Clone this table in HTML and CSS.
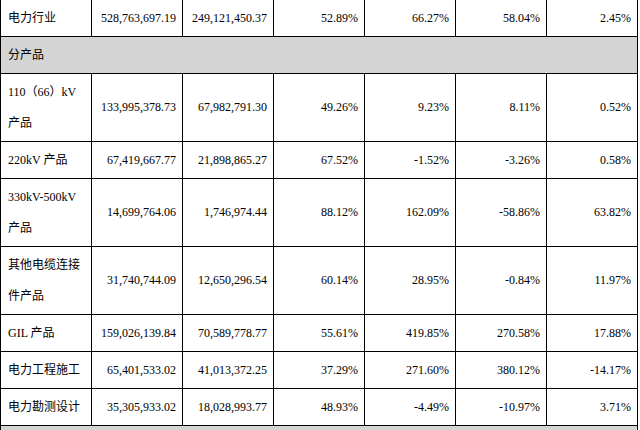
FILE: index.html
```html
<!DOCTYPE html>
<html lang="zh-CN">
<head>
<meta charset="utf-8">
<title>分产品</title>
<link rel="stylesheet" href="styles.css">
</head>
<body>
<table class="data">
  <colgroup>
    <col class="c"><col class="c"><col class="c"><col class="c"><col class="c"><col class="c"><col class="c">
  </colgroup>
  <tbody>
    <tr>
      <td class="name">电力行业</td>
      <td>528,763,697.19</td>
      <td>249,121,450.37</td>
      <td>52.89%</td>
      <td>66.27%</td>
      <td>58.04%</td>
      <td>2.45%</td>
    </tr>
    <tr class="section">
      <td class="name" colspan="7">分产品</td>
    </tr>
    <tr>
      <td class="name">110（66）kV 产品</td>
      <td>133,995,378.73</td>
      <td>67,982,791.30</td>
      <td>49.26%</td>
      <td>9.23%</td>
      <td>8.11%</td>
      <td>0.52%</td>
    </tr>
    <tr>
      <td class="name">220kV 产品</td>
      <td>67,419,667.77</td>
      <td>21,898,865.27</td>
      <td>67.52%</td>
      <td>-1.52%</td>
      <td>-3.26%</td>
      <td>0.58%</td>
    </tr>
    <tr>
      <td class="name">330kV-500kV 产品</td>
      <td>14,699,764.06</td>
      <td>1,746,974.44</td>
      <td>88.12%</td>
      <td>162.09%</td>
      <td>-58.86%</td>
      <td>63.82%</td>
    </tr>
    <tr>
      <td class="name">其他电缆连接件产品</td>
      <td>31,740,744.09</td>
      <td>12,650,296.54</td>
      <td>60.14%</td>
      <td>28.95%</td>
      <td>-0.84%</td>
      <td>11.97%</td>
    </tr>
    <tr>
      <td class="name">GIL 产品</td>
      <td>159,026,139.84</td>
      <td>70,589,778.77</td>
      <td>55.61%</td>
      <td>419.85%</td>
      <td>270.58%</td>
      <td>17.88%</td>
    </tr>
    <tr>
      <td class="name">电力工程施工</td>
      <td>65,401,533.02</td>
      <td>41,013,372.25</td>
      <td>37.29%</td>
      <td>271.60%</td>
      <td>380.12%</td>
      <td>-14.17%</td>
    </tr>
    <tr>
      <td class="name">电力勘测设计</td>
      <td>35,305,933.02</td>
      <td>18,028,993.77</td>
      <td>48.93%</td>
      <td>-4.49%</td>
      <td>-10.97%</td>
      <td>3.71%</td>
    </tr>
    <tr class="section blank">
      <td colspan="7"></td>
    </tr>
  </tbody>
</table>
</body>
</html>
```

FILE: styles.css
```css
html, body {
  margin: 0;
  padding: 0;
  background: #ffffff;
}

body {
  overflow: hidden;
  font-family: "Liberation Serif", "Noto Sans CJK SC", serif;
  font-size: 12px;
  color: #000000;
}

.data {
  border-collapse: collapse;
  table-layout: fixed;
  width: 637px;
  margin-top: -1px;
}

.data .c {
  width: 91px;
}

.data td {
  border: 1px solid #000000;
  padding: 2.5px 6px 2.5px 7px;
  line-height: 31px;
  text-align: right;
  vertical-align: middle;
  white-space: normal;
  word-break: normal;
}

.data td.name {
  text-align: left;
}

.section td {
  background: #d4d4d4;
}

.blank td {
  height: 31px;
}
```
